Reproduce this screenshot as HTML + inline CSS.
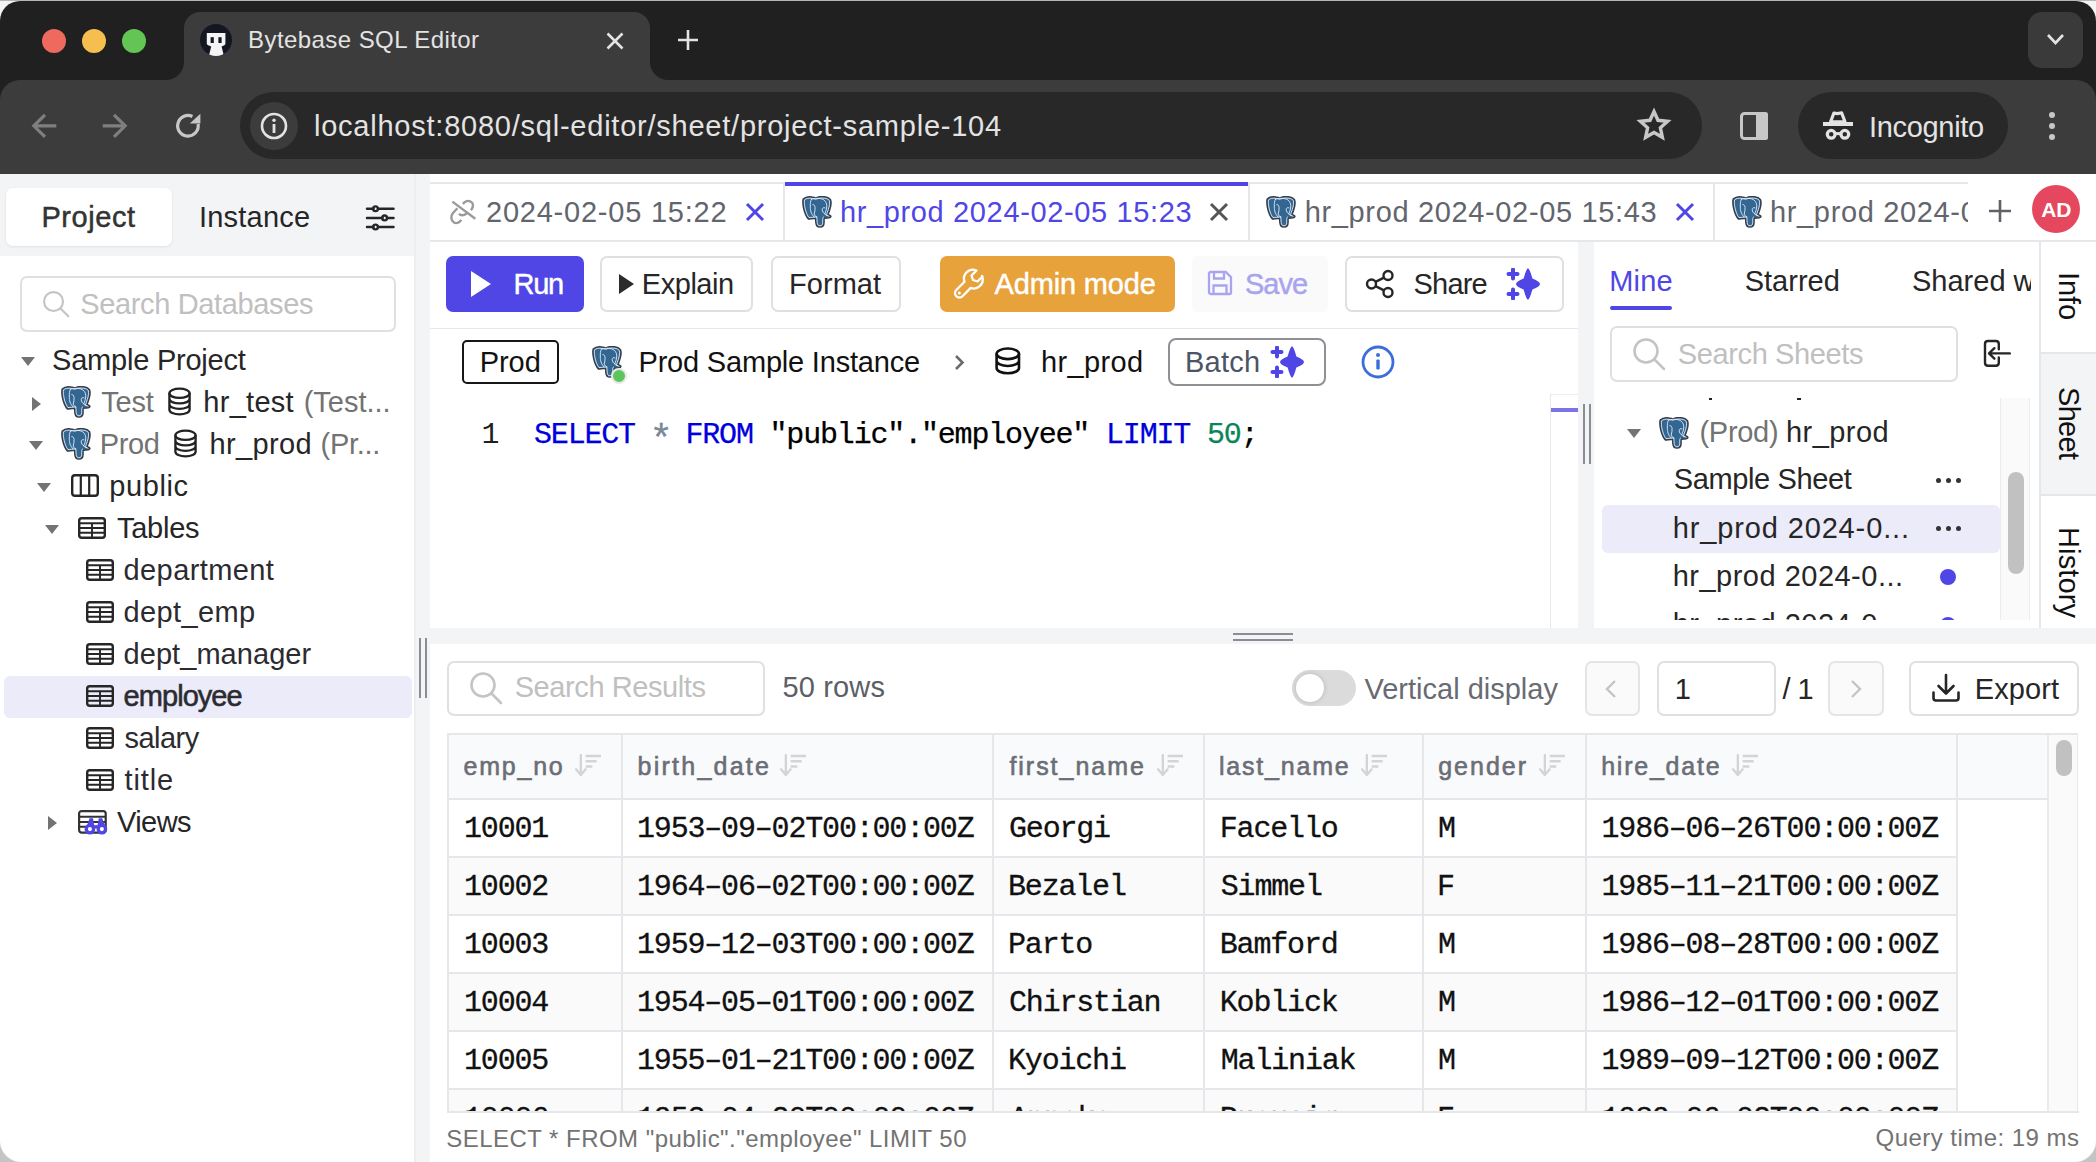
<!DOCTYPE html>
<html><head><meta charset="utf-8"><title>Bytebase SQL Editor</title>
<style>
html,body{margin:0;padding:0;width:2096px;height:1162px;overflow:hidden;background:#b9b9b9;font-family:"Liberation Sans",sans-serif;}
#win{position:absolute;left:0;top:0;width:2096px;height:1162px;overflow:hidden;}
#win div, #win span, #win svg{position:absolute;}
svg{overflow:visible}
#win span span{position:static}
</style></head><body>
<svg width="0" height="0" style="position:absolute">
<defs>
<symbol id="pg" viewBox="0 0 31 33">
<path id="pgo" d="M1.2 3.2C3.5 1 7 0.6 9.5 0.9 11.2 1.1 12.8 1.6 14.2 1.9 16 1.2 18 0.6 20.5 0.6 23.8 0.6 27.5 1.2 29.5 3.8 30.5 6.5 29.8 11 28.6 14.5 27.9 16.6 27.2 18.2 26.8 19.5 28.2 19.6 30 20.1 29.9 21.3 29.6 22.6 27 23 22.8 23V27.6C22.8 30 21.6 32 18.6 32.2 15.8 32.3 14.6 30.2 14.3 27.5L14 23.1C11.5 23.3 8.8 23.6 6.6 23.8 4.3 21.6 2.6 17 1.6 12.6.9 9 .6 5.5 1.2 3.2Z" fill="#336791" stroke="#363b44" stroke-width="1.5" stroke-linejoin="round"/>
<path d="M2.6 4C4.5 2.4 7.2 2.1 9.6 2.4 11 2.6 12.6 3.1 14.2 3.4 16 2.7 18 2.1 20.5 2.1 23.6 2.1 26.7 2.7 28.2 4.5 28.9 6.8 28.3 10.6 27.2 14 26.6 15.9 25.8 17.5 25.3 19.8 26.6 20.4 28 20.7 28.3 21.3M22.6 21.5C21.3 21.7 21.4 24 21.4 27.5 21.4 29.6 20.5 30.8 18.6 30.8 16.7 30.9 15.9 29.6 15.7 27.4L15.3 21.6C12.6 21.9 9.6 22.2 7.2 22.3 5.5 20.3 4.1 16.8 3.1 12.4 2.5 9.2 2.2 6 2.6 4" fill="none" stroke="#e8f0ff" stroke-width="0.9"/>
<path d="M9.8 3.2C8.6 5 8.5 8 8.6 11.5 8.7 15 9 18 12.6 21.8M9.8 3.2C12 2.2 17 2 20.5 3 23.5 4 25.5 6.5 25.6 10 25.6 13.5 24.4 16.3 23.5 18.6 24.2 19.6 25.4 20.2 26.6 20.4M11.2 8.8C12.3 8.8 13.3 9.8 13.5 11.8 13.6 14 13.3 16.5 12.6 18.6 12.9 20 13.8 21.2 15.3 21.6M23.8 12.3C22.2 11.6 20.9 12.2 20.9 14.2 21 16 22 17.6 23.5 18.6" fill="none" stroke="#e8f0ff" stroke-width="0.9" stroke-linecap="round"/>
</symbol>
<symbol id="db" viewBox="0 0 26 30">
<ellipse cx="13" cy="6.5" rx="10.5" ry="4.8" fill="none" stroke="#222" stroke-width="2.4"/>
<path d="M2.5 6.5v17c0 2.7 4.7 4.8 10.5 4.8s10.5-2.1 10.5-4.8v-17M2.5 12.2c0 2.7 4.7 4.8 10.5 4.8s10.5-2.1 10.5-4.8M2.5 17.9c0 2.7 4.7 4.8 10.5 4.8s10.5-2.1 10.5-4.8" fill="none" stroke="#222" stroke-width="2.4"/>
</symbol>
<symbol id="db2" viewBox="0 0 26 30">
<ellipse cx="12.8" cy="7.8" rx="11.2" ry="5.3" fill="none" stroke="#111" stroke-width="2.6"/>
<path d="M1.6 7.8V22c0 2.9 5 5.3 11.2 5.3S24 24.9 24 22V7.8M1.6 14.7c0 2.9 5 5.3 11.2 5.3S24 17.6 24 14.7" fill="none" stroke="#111" stroke-width="2.6"/>
</symbol>
<symbol id="tbl" viewBox="0 0 28 22">
<rect x="1.2" y="1.2" width="25.6" height="19.6" rx="2.5" fill="none" stroke="#262626" stroke-width="2.4"/>
<path d="M1.2 6.2h25.6M1.2 11h25.6M1.2 15.8h25.6M14 6.2v14.6" fill="none" stroke="#262626" stroke-width="1.9"/>
</symbol>
<symbol id="xx" viewBox="0 0 20 20">
<path d="M2 2L18 18M18 2L2 18" stroke="currentColor" stroke-width="3" stroke-linecap="butt"/>
</symbol>
<symbol id="spark" viewBox="0 0 34 32">
<path d="M22 0.3Q23.5 0.3 26.4 10.5Q34 13.5 34 16Q34 18.5 26.4 21.5Q23.5 31.7 22 31.7Q20.5 31.7 17.6 21.5Q10 18.5 10 16Q10 13.5 17.6 10.5Q20.5 0.3 22 0.3Z" fill="#4f46e5"/>
<path d="M7 1.5v9M2.5 6h9M7 21.5v9M2.5 26h9" stroke="#4f46e5" stroke-width="4" stroke-linecap="round"/>
</symbol>
<symbol id="mag" viewBox="0 0 34 34">
<circle cx="14" cy="14" r="11.5" fill="none" stroke="currentColor" stroke-width="2.6"/>
<path d="M22.5 22.5L32 32" stroke="currentColor" stroke-width="2.6" stroke-linecap="round"/>
</symbol>
<symbol id="sort" viewBox="0 0 28 24">
<path d="M6 1v20M1 16l5 6 5-6" fill="none" stroke="#d4d4d4" stroke-width="2.4" stroke-linecap="round" stroke-linejoin="round"/>
<path d="M11 2.2h16M11 7.6h11.5M11 13h7" stroke="#d4d4d4" stroke-width="2.6"/>
</symbol>
</defs></svg>
<div id="win">
<div style="left:0;top:0;width:2096px;height:1162px;background:#f4f4f4;"></div>
<div style="left:0;top:0;width:2096px;height:1px;background:#b5b5b5;"></div>
<div style="left:0;top:1px;width:2096px;height:1161px;background:#fff;border-radius:20px 20px 0 0;overflow:hidden;"><div style="left:0;top:0;width:2096px;height:100px;background:#202020;"></div><div style="left:0;top:79px;width:2096px;height:94px;background:#3c3c3c;border-radius:20px 20px 0 0;"></div></div>
<div style="position:absolute;left:42px;top:29px;width:24px;height:24px;border-radius:50%;background:#ee6a5f;"></div>
<div style="position:absolute;left:82px;top:29px;width:24px;height:24px;border-radius:50%;background:#f5be4f;"></div>
<div style="position:absolute;left:122px;top:29px;width:24px;height:24px;border-radius:50%;background:#62c554;"></div>
<div style="position:absolute;left:184px;top:12px;width:466px;height:68px;background:#3c3c3c;border-radius:16px 16px 0 0;"></div>
<div style="position:absolute;left:166px;top:62px;width:18px;height:18px;background:radial-gradient(circle at 0 0, #202020 17.5px, #3c3c3c 18.5px);"></div>
<div style="position:absolute;left:650px;top:62px;width:18px;height:18px;background:radial-gradient(circle at 100% 0, #202020 17.5px, #3c3c3c 18.5px);"></div>
<svg style="left:199px;top:23px" width="34" height="34" viewBox="0 0 34 34"><clipPath id="fvc"><circle cx="17" cy="17" r="16"/></clipPath><circle cx="17" cy="17" r="16" fill="#141722"/><path clip-path="url(#fvc)" d="M7.8 9.9H26.4V20.8C26.4 22 25 22.8 22.6 23.4L25.2 34H9.6L12.2 23.4C9.8 22.8 7.8 22 7.8 20.8Z" fill="#f4f4f4"/><rect x="11.6" y="14.2" width="3.2" height="5.8" fill="#141722"/><rect x="19.4" y="14.2" width="3.2" height="5.8" fill="#141722"/></svg>
<span style='position:absolute;left:248.00px;top:27.68px;font:400 24px/1 "Liberation Sans", sans-serif;color:#e3e3e3;letter-spacing:0.437px;white-space:nowrap;'>Bytebase SQL Editor</span>
<svg style="left:606px;top:32px" width="18" height="18" viewBox="0 0 18 18"><path d="M1.5 1.5l15 15M16.5 1.5l-15 15" stroke="#e3e3e3" stroke-width="2.6"/></svg>
<svg style="left:677px;top:29px" width="22" height="22" viewBox="0 0 22 22"><path d="M11 1v20M1 11h20" stroke="#e3e3e3" stroke-width="2.6"/></svg>
<div style="position:absolute;left:2028px;top:12px;width:55px;height:56px;background:#3a3a3a;border-radius:14px;"></div>
<svg style="left:2046px;top:33px" width="19" height="13" viewBox="0 0 19 13"><path d="M2 2l7.5 8 7.5-8" fill="none" stroke="#e3e3e3" stroke-width="2.6"/></svg>
<svg style="left:31px;top:113px" width="26" height="26" viewBox="0 0 26 26"><path d="M25.3 12.8H2.5M14 1.8L2.8 12.8 14 23.8" fill="none" stroke="#7f7f7f" stroke-width="3.2"/></svg>
<svg style="left:102px;top:113px" width="26" height="26" viewBox="0 0 26 26"><path d="M0.7 12.8H23.5M12 1.8L23.2 12.8 12 23.8" fill="none" stroke="#7f7f7f" stroke-width="3.2"/></svg>
<svg style="left:175px;top:112px" width="28" height="28" viewBox="0 0 28 28"><path d="M23.1 12.0A10.3 10.3 0 1 1 17.4 4.5" fill="none" stroke="#c7c7c7" stroke-width="3.2"/><path d="M14.8 11.5H25.4V1.8Z" fill="#c7c7c7"/></svg>
<div style="position:absolute;left:240px;top:92px;width:1462px;height:67px;background:#282828;border-radius:34px;"></div>
<div style="position:absolute;left:250px;top:102px;width:48px;height:48px;background:#3c3c3c;border-radius:50%;"></div>
<svg style="left:260px;top:112px" width="28" height="28" viewBox="0 0 28 28"><circle cx="14" cy="14" r="12" fill="none" stroke="#e3e3e3" stroke-width="2.6"/><rect x="12.6" y="12" width="2.8" height="9" fill="#e3e3e3"/><circle cx="14" cy="8.3" r="1.7" fill="#e3e3e3"/></svg>
<span style='position:absolute;left:314.00px;top:112.25px;font:400 29px/1 "Liberation Sans", sans-serif;color:#e3e3e3;letter-spacing:0.765px;white-space:nowrap;'>localhost:8080/sql-editor/sheet/project-sample-104</span>
<svg style="left:1637px;top:108px" width="34" height="33" viewBox="0 0 34 33"><path d="M17 3.5l4 8.8 9.6 1-7.2 6.5 2 9.5L17 24.5l-8.4 4.8 2-9.5-7.2-6.5 9.6-1Z" fill="none" stroke="#c7c7c7" stroke-width="3.4" stroke-linejoin="miter"/></svg>
<svg style="left:1739px;top:111px" width="30" height="30" viewBox="0 0 30 30"><rect x="2.5" y="2.5" width="25" height="25" rx="3" fill="none" stroke="#c7c7c7" stroke-width="3"/><rect x="17" y="1" width="12" height="28" rx="2.5" fill="#c7c7c7"/></svg>
<div style="position:absolute;left:1798px;top:92px;width:210px;height:67px;background:#282828;border-radius:34px;"></div>
<svg style="left:1822px;top:110px" width="32" height="31" viewBox="0 0 32 31"><path d="M8.6 11.8L11.9 3 15.4 3.6 19.6 2.8 23 11.8Z" fill="none" stroke="#e3e3e3" stroke-width="3.2" stroke-linejoin="round"/><rect x="1" y="12" width="30" height="4" fill="#e3e3e3"/><circle cx="9.2" cy="24.3" r="3.9" fill="none" stroke="#e3e3e3" stroke-width="3.3"/><circle cx="22.8" cy="24.3" r="3.9" fill="none" stroke="#e3e3e3" stroke-width="3.3"/><path d="M12.5 23.6h7" stroke="#e3e3e3" stroke-width="3"/></svg>
<span style='position:absolute;left:1869.00px;top:112.75px;font:400 29px/1 "Liberation Sans", sans-serif;color:#e3e3e3;letter-spacing:-0.321px;white-space:nowrap;'>Incognito</span>
<div style="position:absolute;left:2049px;top:112px;width:6px;height:6px;background:#c7c7c7;border-radius:50%;"></div>
<div style="position:absolute;left:2049px;top:123px;width:6px;height:6px;background:#c7c7c7;border-radius:50%;"></div>
<div style="position:absolute;left:2049px;top:134px;width:6px;height:6px;background:#c7c7c7;border-radius:50%;"></div>
<div style="left:0;top:174px;width:2096px;height:988px;background:#fff;"></div>
<div style="position:absolute;left:0px;top:174px;width:414px;height:82px;background:#f3f4f6;"></div>
<div style="position:absolute;left:6px;top:188px;width:166px;height:58px;background:#fff;border-radius:7px;box-shadow:0 1px 3px rgba(0,0,0,0.08);"></div>
<span style='position:absolute;left:41.40px;top:203.25px;font:400 29px/1 "Liberation Sans", sans-serif;color:#333;letter-spacing:0.567px;white-space:nowrap;-webkit-text-stroke:0.45px #333;'>Project</span>
<span style='position:absolute;left:198.90px;top:203.25px;font:400 29px/1 "Liberation Sans", sans-serif;color:#262626;letter-spacing:0.229px;white-space:nowrap;'>Instance</span>
<svg style="left:366px;top:204px" width="29" height="27" viewBox="0 0 29 27"><path d="M1 4.8h6.5M12 4.8h15.5M1 13.9h15.5M21 13.9h6.5M1 23h6.5M12 23h15.5" stroke="#262626" stroke-width="2.5" stroke-linecap="round"/><circle cx="9.5" cy="4.8" r="2.4" fill="none" stroke="#262626" stroke-width="2.3"/><circle cx="18.6" cy="13.9" r="2.4" fill="none" stroke="#262626" stroke-width="2.3"/><circle cx="9.5" cy="23" r="2.4" fill="none" stroke="#262626" stroke-width="2.3"/></svg>
<div style="position:absolute;left:414px;top:174px;width:16px;height:988px;background:#f3f4f6;"></div>
<div style="position:absolute;left:414px;top:174px;width:2px;height:988px;background:#eceef1;"></div>
<div style="position:absolute;left:419px;top:638px;width:2px;height:60px;background:#8a8d93;"></div>
<div style="position:absolute;left:425px;top:638px;width:2px;height:60px;background:#8a8d93;"></div>
<div style="position:absolute;left:20px;top:276px;width:376px;height:56px;box-sizing:border-box;border:2px solid #e0e0e0;border-radius:7px;background:#fff;"></div>
<svg style="left:42px;top:290px" width="28" height="28" viewBox="0 0 34 34" color="#c4c4c4"><use href="#mag"/></svg>
<span style='position:absolute;left:80.20px;top:289.85px;font:400 29px/1 "Liberation Sans", sans-serif;color:#c0c0c0;letter-spacing:-0.352px;white-space:nowrap;'>Search Databases</span>
<svg style="left:21px;top:357px" width="14" height="9" viewBox="0 0 14 9"><path d="M0 0h14L7 9Z" fill="#737373"/></svg>
<span style='position:absolute;left:52.00px;top:346.25px;font:400 29px/1 "Liberation Sans", sans-serif;color:#262626;letter-spacing:-0.214px;white-space:nowrap;'>Sample Project</span>
<svg style="left:32px;top:397px" width="9" height="14" viewBox="0 0 9 14"><path d="M0 0v14L9 7Z" fill="#737373"/></svg>
<svg style="left:61px;top:386px" width="30" height="31.9" viewBox="0 0 31 33"><use href="#pg"/></svg>
<span style='position:absolute;left:101.20px;top:388.25px;font:400 29px/1 "Liberation Sans", sans-serif;color:#737373;letter-spacing:-0.176px;white-space:nowrap;'>Test</span>
<svg style="left:167px;top:387px" width="25" height="29" viewBox="0 0 26 30"><use href="#db"/></svg>
<span style='position:absolute;left:203.30px;top:388.25px;font:400 29px/1 "Liberation Sans", sans-serif;color:#262626;letter-spacing:0.283px;white-space:nowrap;'>hr_test</span>
<span style='position:absolute;left:303.70px;top:388.25px;font:400 29px/1 "Liberation Sans", sans-serif;color:#737373;letter-spacing:-0.008px;white-space:nowrap;'>(Test...</span>
<svg style="left:29px;top:441px" width="14" height="9" viewBox="0 0 14 9"><path d="M0 0h14L7 9Z" fill="#737373"/></svg>
<svg style="left:61px;top:428px" width="30" height="31.9" viewBox="0 0 31 33"><use href="#pg"/></svg>
<span style='position:absolute;left:99.80px;top:430.25px;font:400 29px/1 "Liberation Sans", sans-serif;color:#737373;letter-spacing:-0.376px;white-space:nowrap;'>Prod</span>
<svg style="left:173px;top:429px" width="25" height="29" viewBox="0 0 26 30"><use href="#db"/></svg>
<span style='position:absolute;left:209.40px;top:430.25px;font:400 29px/1 "Liberation Sans", sans-serif;color:#262626;letter-spacing:0.395px;white-space:nowrap;'>hr_prod</span>
<span style='position:absolute;left:320.50px;top:430.25px;font:400 29px/1 "Liberation Sans", sans-serif;color:#737373;letter-spacing:-0.274px;white-space:nowrap;'>(Pr...</span>
<svg style="left:37px;top:483px" width="14" height="9" viewBox="0 0 14 9"><path d="M0 0h14L7 9Z" fill="#737373"/></svg>
<svg style="left:71px;top:474px" width="28" height="23" viewBox="0 0 28 23"><rect x="1.2" y="1.2" width="25.6" height="20.6" rx="2.8" fill="none" stroke="#262626" stroke-width="2.4"/><path d="M9.8 1.2v20.6M18.2 1.2v20.6" stroke="#262626" stroke-width="2.2"/></svg>
<span style='position:absolute;left:109.20px;top:472.25px;font:400 29px/1 "Liberation Sans", sans-serif;color:#262626;letter-spacing:0.626px;white-space:nowrap;'>public</span>
<svg style="left:45px;top:525px" width="14" height="9" viewBox="0 0 14 9"><path d="M0 0h14L7 9Z" fill="#737373"/></svg>
<svg style="left:78px;top:517px" width="28" height="22" viewBox="0 0 28 22"><use href="#tbl"/></svg>
<span style='position:absolute;left:117.00px;top:514.25px;font:400 29px/1 "Liberation Sans", sans-serif;color:#262626;letter-spacing:-0.266px;white-space:nowrap;'>Tables</span>
<div style="position:absolute;left:4px;top:676px;width:408px;height:42px;background:#ebebfa;border-radius:6px;"></div>
<svg style="left:86px;top:559px" width="28" height="22" viewBox="0 0 28 22"><use href="#tbl"/></svg>
<span style='position:absolute;left:123.60px;top:556.25px;font:400 29px/1 "Liberation Sans", sans-serif;color:#2b2b30;letter-spacing:0.384px;white-space:nowrap;'>department</span>
<svg style="left:86px;top:601px" width="28" height="22" viewBox="0 0 28 22"><use href="#tbl"/></svg>
<span style='position:absolute;left:123.60px;top:598.25px;font:400 29px/1 "Liberation Sans", sans-serif;color:#2b2b30;letter-spacing:0.363px;white-space:nowrap;'>dept_emp</span>
<svg style="left:86px;top:643px" width="28" height="22" viewBox="0 0 28 22"><use href="#tbl"/></svg>
<span style='position:absolute;left:123.60px;top:640.25px;font:400 29px/1 "Liberation Sans", sans-serif;color:#2b2b30;letter-spacing:0.048px;white-space:nowrap;'>dept_manager</span>
<svg style="left:86px;top:685px" width="28" height="22" viewBox="0 0 28 22"><use href="#tbl"/></svg>
<span style='position:absolute;left:123.60px;top:682.25px;font:400 29px/1 "Liberation Sans", sans-serif;color:#2b2b30;letter-spacing:-0.951px;white-space:nowrap;-webkit-text-stroke:0.55px #2b2b30;'>employee</span>
<svg style="left:86px;top:727px" width="28" height="22" viewBox="0 0 28 22"><use href="#tbl"/></svg>
<span style='position:absolute;left:124.60px;top:724.25px;font:400 29px/1 "Liberation Sans", sans-serif;color:#2b2b30;letter-spacing:-0.551px;white-space:nowrap;'>salary</span>
<svg style="left:86px;top:769px" width="28" height="22" viewBox="0 0 28 22"><use href="#tbl"/></svg>
<span style='position:absolute;left:124.60px;top:766.25px;font:400 29px/1 "Liberation Sans", sans-serif;color:#2b2b30;letter-spacing:0.850px;white-space:nowrap;'>title</span>
<svg style="left:48px;top:816px" width="9" height="14" viewBox="0 0 9 14"><path d="M0 0v14L9 7Z" fill="#737373"/></svg>
<svg style="left:78px;top:810px" width="31" height="26" viewBox="0 0 31 26"><rect x="1.1" y="1.1" width="26.6" height="21.5" rx="2.5" fill="none" stroke="#333" stroke-width="2.2"/><path d="M1.1 6.7h26.6M1.1 11.9h26.6M1.1 16.7h26.6" stroke="#333" stroke-width="2"/><path d="M8 18.5L11.6 8.3h3.4l1.2 7h3.4l1.2-7h3.4l3.6 10.2Z" fill="#4f46e5"/><circle cx="11.9" cy="19.1" r="3.7" fill="#fff" stroke="#4f46e5" stroke-width="3.3"/><circle cx="23.9" cy="19.1" r="3.7" fill="#fff" stroke="#4f46e5" stroke-width="3.3"/></svg>
<span style='position:absolute;left:117.00px;top:808.25px;font:400 29px/1 "Liberation Sans", sans-serif;color:#262626;letter-spacing:-0.583px;white-space:nowrap;'>Views</span>
<div style="position:absolute;left:430px;top:182px;width:1538px;height:2px;background:#e5e7eb;"></div>
<div style="position:absolute;left:430px;top:240px;width:1666px;height:2px;background:#e5e7eb;"></div>
<div style="position:absolute;left:783px;top:184px;width:2px;height:56px;background:#e5e7eb;"></div>
<div style="position:absolute;left:1248px;top:184px;width:2px;height:56px;background:#e5e7eb;"></div>
<div style="position:absolute;left:1713px;top:184px;width:2px;height:56px;background:#e5e7eb;"></div>
<div style="position:absolute;left:785px;top:182px;width:463px;height:4px;background:#4f46e5;"></div>
<svg style="left:449px;top:199px" width="28" height="26" viewBox="0 0 28 26"><path d="M3.4 2.6L26.3 19.7M13.9 5C15.5 2.5 18.5 1 21.5 2.5 24.5 4 25 7.5 22 11.2M8.4 9.2L4 14C1.5 17 1.8 21.5 5 23.5 7.5 25 10.5 23.5 12.3 20.8M10 14.6C11.5 16.8 14.5 17 17.7 14.3" fill="none" stroke="#9a9a9a" stroke-width="2.4" stroke-linecap="butt"/></svg>
<span style='position:absolute;left:486.00px;top:198.25px;font:400 29px/1 "Liberation Sans", sans-serif;color:#62656d;letter-spacing:0.777px;white-space:nowrap;'>2024-02-05 15:22</span>
<svg style="left:745px;top:202px;color:#4f46e5" width="20" height="20" viewBox="0 0 20 20"><use href="#xx"/></svg>
<svg style="left:802px;top:196px" width="30" height="31.9" viewBox="0 0 31 33"><use href="#pg"/></svg>
<span style='position:absolute;left:839.90px;top:198.25px;font:400 29px/1 "Liberation Sans", sans-serif;color:#4f46e5;letter-spacing:0.645px;white-space:nowrap;'>hr_prod 2024-02-05 15:23</span>
<svg style="left:1209px;top:202px;color:#555" width="20" height="20" viewBox="0 0 20 20"><use href="#xx"/></svg>
<svg style="left:1266px;top:196px" width="30" height="31.9" viewBox="0 0 31 33"><use href="#pg"/></svg>
<span style='position:absolute;left:1304.70px;top:198.25px;font:400 29px/1 "Liberation Sans", sans-serif;color:#62656d;letter-spacing:0.650px;white-space:nowrap;'>hr_prod 2024-02-05 15:43</span>
<svg style="left:1675px;top:202px;color:#4f46e5" width="20" height="20" viewBox="0 0 20 20"><use href="#xx"/></svg>
<svg style="left:1732px;top:196px" width="30" height="31.9" viewBox="0 0 31 33"><use href="#pg"/></svg>
<div style="left:0;top:0;width:1968px;height:1162px;overflow:hidden;">
<span style='position:absolute;left:1770.00px;top:198.25px;font:400 29px/1 "Liberation Sans", sans-serif;color:#62656d;letter-spacing:0.650px;white-space:nowrap;'>hr_prod 2024-02-05 15:52</span>
</div>
<svg style="left:1989px;top:200px" width="22" height="22" viewBox="0 0 22 22"><path d="M11 0v22M0 11h22" stroke="#5f6368" stroke-width="2.6"/></svg>
<div style="position:absolute;left:2032px;top:185px;width:48px;height:48px;background:#e5485e;border-radius:50%;"></div>
<span style='position:absolute;left:2041.30px;top:198.82px;font:700 21px/1 "Liberation Sans", sans-serif;color:#fff;letter-spacing:-0.266px;white-space:nowrap;'>AD</span>
<div style="position:absolute;left:446px;top:256px;width:138px;height:56px;background:#4f46e5;border-radius:7px;"></div>
<svg style="left:470px;top:270px" width="22" height="28" viewBox="0 0 22 28"><path d="M1 1l20 13L1 27Z" fill="#fff"/></svg>
<span style='position:absolute;left:513.60px;top:270.25px;font:400 29px/1 "Liberation Sans", sans-serif;color:#fff;letter-spacing:-1.336px;white-space:nowrap;-webkit-text-stroke:0.45px #fff;'>Run</span>
<div style="position:absolute;left:600px;top:256px;width:153px;height:56px;box-sizing:border-box;border:2px solid #e0e0e0;border-radius:7px;background:#fff;"></div>
<svg style="left:619px;top:274px" width="15" height="20" viewBox="0 0 15 20"><path d="M0 0l15 10L0 20Z" fill="#2b2b2b"/></svg>
<span style='position:absolute;left:641.80px;top:270.25px;font:400 29px/1 "Liberation Sans", sans-serif;color:#262626;letter-spacing:-0.464px;white-space:nowrap;'>Explain</span>
<div style="position:absolute;left:771px;top:256px;width:130px;height:56px;box-sizing:border-box;border:2px solid #e0e0e0;border-radius:7px;background:#fff;"></div>
<span style='position:absolute;left:789.00px;top:270.25px;font:400 29px/1 "Liberation Sans", sans-serif;color:#262626;letter-spacing:0.043px;white-space:nowrap;'>Format</span>
<div style="position:absolute;left:940px;top:256px;width:235px;height:56px;background:#e8a23b;border-radius:7px;"></div>
<svg style="left:953px;top:268px" width="32" height="32" viewBox="0 0 32 32"><path d="M29.5 8.5l-5 5-4.5-1.5-1.5-4.5 5-5c-3.5-1.4-7.7-.6-10.3 2.3-2.3 2.5-2.8 6-1.7 9L3.3 22c-1.7 1.7-1.7 4.5 0 6.2 1.7 1.7 4.5 1.7 6.2 0l8.2-8.3c3 1.1 6.5.6 9-1.7 2.9-2.6 3.7-6.8 2.3-10.3Z" fill="none" stroke="#fff" stroke-width="2.3" stroke-linejoin="round"/><circle cx="6.4" cy="25.1" r="1.5" fill="#fff"/></svg>
<span style='position:absolute;left:994.50px;top:270.25px;font:400 29px/1 "Liberation Sans", sans-serif;color:#fff;letter-spacing:-0.152px;white-space:nowrap;-webkit-text-stroke:0.45px #fff;'>Admin mode</span>
<div style="position:absolute;left:1192px;top:256px;width:136px;height:56px;background:#fafafa;border-radius:7px;"></div>
<svg style="left:1207px;top:270px" width="26" height="26" viewBox="0 0 26 26"><path d="M2 3.5C2 2.7 2.7 2 3.5 2h15.3L24 7.2v15.3c0 .8-.7 1.5-1.5 1.5h-19C2.7 24 2 23.3 2 22.5Z" fill="none" stroke="#a9a4ee" stroke-width="2.3"/><path d="M7 2v6.5h10V2M6.5 24v-8.5h13V24" fill="none" stroke="#a9a4ee" stroke-width="2.3"/></svg>
<span style='position:absolute;left:1245.00px;top:270.25px;font:400 29px/1 "Liberation Sans", sans-serif;color:#a9a4ee;letter-spacing:-0.990px;white-space:nowrap;-webkit-text-stroke:0.45px #a9a4ee;'>Save</span>
<div style="position:absolute;left:1345px;top:256px;width:219px;height:56px;box-sizing:border-box;border:2px solid #e0e0e0;border-radius:7px;background:#fff;"></div>
<svg style="left:1365px;top:269px" width="30" height="30" viewBox="0 0 30 30"><circle cx="23" cy="6.5" r="4.5" fill="none" stroke="#262626" stroke-width="2.4"/><circle cx="6.5" cy="15" r="4.5" fill="none" stroke="#262626" stroke-width="2.4"/><circle cx="23" cy="23.5" r="4.5" fill="none" stroke="#262626" stroke-width="2.4"/><path d="M10.5 12.8l8.5-4.2M10.5 17.2l8.5 4.2" stroke="#262626" stroke-width="2.4"/></svg>
<span style='position:absolute;left:1413.50px;top:270.25px;font:400 29px/1 "Liberation Sans", sans-serif;color:#262626;letter-spacing:-0.789px;white-space:nowrap;'>Share</span>
<svg style="left:1506px;top:268px" width="34" height="32" viewBox="0 0 34 32"><use href="#spark"/></svg>
<div style="position:absolute;left:430px;top:328px;width:1148px;height:1px;background:#e5e7eb;"></div>
<div style="position:absolute;left:462px;top:340px;width:97px;height:44px;box-sizing:border-box;border:2px solid #161616;border-radius:5px;"></div>
<span style='position:absolute;left:479.70px;top:348.25px;font:400 29px/1 "Liberation Sans", sans-serif;color:#111;letter-spacing:-0.043px;white-space:nowrap;'>Prod</span>
<svg style="left:592px;top:346px" width="30" height="31.9" viewBox="0 0 31 33"><use href="#pg"/></svg>
<div style="position:absolute;left:611px;top:368px;width:16px;height:16px;background:#5ec45e;border-radius:50%;border:2.5px solid #e8e8e8;box-sizing:border-box;"></div>
<span style='position:absolute;left:638.50px;top:348.25px;font:400 29px/1 "Liberation Sans", sans-serif;color:#111;letter-spacing:-0.195px;white-space:nowrap;'>Prod Sample Instance</span>
<svg style="left:954px;top:354px" width="11" height="17" viewBox="0 0 11 17"><path d="M2 2l6.5 6.5L2 15" fill="none" stroke="#6b6b6b" stroke-width="2.6"/></svg>
<svg style="left:995px;top:346px" width="26" height="30" viewBox="0 0 26 30"><use href="#db2"/></svg>
<span style='position:absolute;left:1041.00px;top:348.25px;font:400 29px/1 "Liberation Sans", sans-serif;color:#111;letter-spacing:0.362px;white-space:nowrap;'>hr_prod</span>
<div style="position:absolute;left:1168px;top:338px;width:158px;height:48px;box-sizing:border-box;border:2px solid #8f9096;border-radius:8px;"></div>
<span style='position:absolute;left:1185.00px;top:348.25px;font:400 29px/1 "Liberation Sans", sans-serif;color:#4b5563;letter-spacing:0.243px;white-space:nowrap;'>Batch</span>
<svg style="left:1270px;top:346px" width="34" height="32" viewBox="0 0 34 32"><use href="#spark"/></svg>
<svg style="left:1361px;top:345px" width="34" height="34" viewBox="0 0 34 34"><circle cx="17" cy="17" r="15" fill="none" stroke="#3b6ddb" stroke-width="2.8"/><rect x="15.3" y="14.5" width="3.4" height="10" rx="1" fill="#3b6ddb"/><circle cx="17" cy="10" r="2" fill="#3b6ddb"/></svg>
<span style='position:absolute;left:481.40px;top:420.02px;font:400 30px/1 "Liberation Mono", monospace;color:#1f1f1f;letter-spacing:-1.180px;white-space:nowrap;'>1</span>
<span style='position:absolute;left:534.00px;top:420.02px;font:400 30px/1 "Liberation Mono", monospace;color:#000;letter-spacing:-1.180px;white-space:nowrap;-webkit-text-stroke:0.25px currentColor;'><span style="color:#0000dd">SELECT</span> <span style="display:inline-block;width:16.82px;transform:translateY(6px) scale(1.3);color:#778899">*</span> <span style="color:#0000dd">FROM</span> "public"."employee" <span style="color:#0000dd">LIMIT</span> <span style="color:#098658">50</span>;</span>
<div style="position:absolute;left:1550px;top:394px;width:1px;height:234px;background:#e8e8e8;"></div>
<div style="position:absolute;left:1551px;top:394px;width:27px;height:1px;background:#eeeeee;"></div>
<div style="position:absolute;left:1551px;top:408px;width:27px;height:4px;background:#7b73e6;"></div>
<div style="position:absolute;left:1578px;top:242px;width:16px;height:386px;background:#f3f4f6;"></div>
<div style="position:absolute;left:1583px;top:404px;width:2px;height:60px;background:#8a8d93;"></div>
<div style="position:absolute;left:1589px;top:404px;width:2px;height:60px;background:#8a8d93;"></div>
<div style="position:absolute;left:430px;top:628px;width:1666px;height:16px;background:#f3f4f6;"></div>
<div style="position:absolute;left:1233px;top:633px;width:60px;height:2px;background:#8a8d93;"></div>
<div style="position:absolute;left:1233px;top:639px;width:60px;height:2px;background:#8a8d93;"></div>
<span style='position:absolute;left:1609.20px;top:266.95px;font:400 29px/1 "Liberation Sans", sans-serif;color:#4f46e5;letter-spacing:0.224px;white-space:nowrap;'>Mine</span>
<div style="position:absolute;left:1610px;top:306px;width:62px;height:4px;background:#4f46e5;border-radius:2px;"></div>
<span style='position:absolute;left:1744.70px;top:266.95px;font:400 29px/1 "Liberation Sans", sans-serif;color:#262626;letter-spacing:0.005px;white-space:nowrap;'>Starred</span>
<div style="left:0;top:0;width:2031px;height:1162px;overflow:hidden;">
<span style='position:absolute;left:1912.00px;top:266.95px;font:400 29px/1 "Liberation Sans", sans-serif;color:#262626;letter-spacing:0.000px;white-space:nowrap;'>Shared with me</span>
</div>
<div style="position:absolute;left:1610px;top:326px;width:348px;height:56px;box-sizing:border-box;border:2px solid #e0e0e0;border-radius:7px;background:#fff;"></div>
<svg style="left:1632px;top:337px" width="34" height="34" viewBox="0 0 34 34" color="#c4c4c4"><use href="#mag"/></svg>
<span style='position:absolute;left:1677.80px;top:339.85px;font:400 29px/1 "Liberation Sans", sans-serif;color:#c0c0c0;letter-spacing:-0.377px;white-space:nowrap;'>Search Sheets</span>
<svg style="left:1981px;top:338px" width="30" height="31" viewBox="0 0 30 31"><path d="M17.8 11.3V6c0-1.7-1.3-3-3-3H7C5.3 3 4 4.3 4 6v18.8c0 1.7 1.3 3 3 3h7.8c1.7 0 3-1.3 3-3v-5.3" fill="none" stroke="#262626" stroke-width="2.4" stroke-linecap="round"/><path d="M28.8 15.4H8.2M13.4 10.2L8 15.4l5.4 5.3" fill="none" stroke="#262626" stroke-width="2.4" stroke-linecap="round" stroke-linejoin="round"/></svg>
<div style="left:0;top:398px;width:2040px;height:222px;overflow:hidden;">
<div style="left:0;top:-398px;width:2040px;height:1162px;">
<div style="position:absolute;left:1709px;top:398px;width:3px;height:2px;background:#222;"></div>
<div style="position:absolute;left:1797px;top:398px;width:4px;height:2px;background:#222;"></div>
<svg style="left:1627px;top:429px" width="14" height="9" viewBox="0 0 14 9"><path d="M0 0h14L7 9Z" fill="#737373"/></svg>
<svg style="left:1659px;top:417px" width="30" height="31.9" viewBox="0 0 31 33"><use href="#pg"/></svg>
<span style='position:absolute;left:1699.50px;top:417.75px;font:400 29px/1 "Liberation Sans", sans-serif;color:#737373;letter-spacing:-0.303px;white-space:nowrap;'>(Prod)</span>
<span style='position:absolute;left:1786.00px;top:417.75px;font:400 29px/1 "Liberation Sans", sans-serif;color:#262626;letter-spacing:0.445px;white-space:nowrap;'>hr_prod</span>
<span style='position:absolute;left:1673.70px;top:465.25px;font:400 29px/1 "Liberation Sans", sans-serif;color:#262626;letter-spacing:-0.374px;white-space:nowrap;'>Sample Sheet</span>
<div style="position:absolute;left:1935.5px;top:478px;width:5px;height:5px;background:#333;border-radius:50%;"></div>
<div style="position:absolute;left:1945.5px;top:478px;width:5px;height:5px;background:#333;border-radius:50%;"></div>
<div style="position:absolute;left:1955.5px;top:478px;width:5px;height:5px;background:#333;border-radius:50%;"></div>
<div style="position:absolute;left:1602px;top:505px;width:398px;height:48px;background:#ebebfa;border-radius:6px;"></div>
<span style='position:absolute;left:1672.70px;top:514.05px;font:400 29px/1 "Liberation Sans", sans-serif;color:#262626;letter-spacing:0.867px;white-space:nowrap;'>hr_prod 2024-0...</span>
<div style="position:absolute;left:1935.5px;top:526px;width:5px;height:5px;background:#333;border-radius:50%;"></div>
<div style="position:absolute;left:1945.5px;top:526px;width:5px;height:5px;background:#333;border-radius:50%;"></div>
<div style="position:absolute;left:1955.5px;top:526px;width:5px;height:5px;background:#333;border-radius:50%;"></div>
<span style='position:absolute;left:1672.70px;top:562.05px;font:400 29px/1 "Liberation Sans", sans-serif;color:#262626;letter-spacing:0.492px;white-space:nowrap;'>hr_prod 2024-0...</span>
<div style="position:absolute;left:1940px;top:569px;width:16px;height:16px;background:#4f46e5;border-radius:50%;"></div>
<span style='position:absolute;left:1672.70px;top:610.05px;font:400 29px/1 "Liberation Sans", sans-serif;color:#262626;letter-spacing:0.492px;white-space:nowrap;'>hr_prod 2024-0...</span>
<div style="position:absolute;left:1940px;top:617px;width:16px;height:16px;background:#4f46e5;border-radius:50%;"></div>
</div></div>
<div style="position:absolute;left:2000px;top:398px;width:30px;height:222px;background:#fafafa;border-left:1px solid #ececec;border-right:1px solid #ececec;box-sizing:border-box;"></div>
<div style="position:absolute;left:2008px;top:472px;width:16px;height:102px;background:#c1c1c1;border-radius:8px;"></div>
<div style="position:absolute;left:2039px;top:242px;width:2px;height:386px;background:#e5e7eb;"></div>
<div style="position:absolute;left:2041px;top:353px;width:55px;height:142px;background:#f3f4f6;"></div>
<div style="position:absolute;left:2041px;top:352px;width:55px;height:2px;background:#e5e7eb;"></div>
<div style="position:absolute;left:2041px;top:494px;width:55px;height:2px;background:#e5e7eb;"></div>
<span style='position:absolute;left:2082.55px;top:272.20px;font:400 29px/1 "Liberation Sans", sans-serif;color:#111;letter-spacing:-0.048px;white-space:nowrap;transform:rotate(90deg);transform-origin:0 0;'>Info</span>
<span style='position:absolute;left:2082.55px;top:387.00px;font:400 29px/1 "Liberation Sans", sans-serif;color:#111;letter-spacing:-0.682px;white-space:nowrap;transform:rotate(90deg);transform-origin:0 0;'>Sheet</span>
<span style='position:absolute;left:2082.55px;top:527.00px;font:400 29px/1 "Liberation Sans", sans-serif;color:#111;letter-spacing:0.129px;white-space:nowrap;transform:rotate(90deg);transform-origin:0 0;'>History</span>
<div style="position:absolute;left:447px;top:661px;width:318px;height:55px;box-sizing:border-box;border:2px solid #e0e0e0;border-radius:7px;background:#fff;"></div>
<svg style="left:469px;top:671px" width="34" height="34" viewBox="0 0 34 34" color="#c4c4c4"><use href="#mag"/></svg>
<span style='position:absolute;left:514.70px;top:673.45px;font:400 29px/1 "Liberation Sans", sans-serif;color:#c0c0c0;letter-spacing:-0.411px;white-space:nowrap;'>Search Results</span>
<span style='position:absolute;left:782.40px;top:673.45px;font:400 29px/1 "Liberation Sans", sans-serif;color:#5c5f66;letter-spacing:0.160px;white-space:nowrap;'>50 rows</span>
<div style="position:absolute;left:1292px;top:670px;width:64px;height:36px;background:#dbdbdb;border-radius:18px;"></div>
<div style="position:absolute;left:1296px;top:674px;width:28px;height:28px;background:#fff;border-radius:50%;box-shadow:0 0 4px 1px rgba(0,0,0,0.12);"></div>
<span style='position:absolute;left:1364.50px;top:675.25px;font:400 29px/1 "Liberation Sans", sans-serif;color:#686b72;letter-spacing:-0.002px;white-space:nowrap;'>Vertical display</span>
<div style="position:absolute;left:1585px;top:661px;width:55px;height:55px;box-sizing:border-box;border:2px solid #e5e5e5;border-radius:7px;background:#fafafa;"></div>
<svg style="left:1604px;top:679px" width="14" height="20" viewBox="0 0 14 20"><path d="M11 2L3 10l8 8" fill="none" stroke="#c4c4c4" stroke-width="2.4"/></svg>
<div style="position:absolute;left:1657px;top:661px;width:119px;height:55px;box-sizing:border-box;border:2px solid #e0e0e0;border-radius:7px;background:#fff;"></div>
<span style='position:absolute;left:1674.80px;top:674.95px;font:400 29px/1 "Liberation Sans", sans-serif;color:#262626;letter-spacing:0.000px;white-space:nowrap;'>1</span>
<span style='position:absolute;left:1782.50px;top:675.25px;font:400 29px/1 "Liberation Sans", sans-serif;color:#262626;letter-spacing:-0.557px;white-space:nowrap;'>/ 1</span>
<div style="position:absolute;left:1828px;top:661px;width:56px;height:55px;box-sizing:border-box;border:2px solid #e5e5e5;border-radius:7px;background:#fafafa;"></div>
<svg style="left:1849px;top:679px" width="14" height="20" viewBox="0 0 14 20"><path d="M3 2l8 8-8 8" fill="none" stroke="#c4c4c4" stroke-width="2.4"/></svg>
<div style="position:absolute;left:1909px;top:661px;width:170px;height:55px;box-sizing:border-box;border:2px solid #e0e0e0;border-radius:7px;background:#fff;"></div>
<svg style="left:1931px;top:673px" width="30" height="30" viewBox="0 0 30 30"><path d="M15 2v18M7.5 13l7.5 7.5 7.5-7.5" fill="none" stroke="#262626" stroke-width="2.6" stroke-linecap="round" stroke-linejoin="round"/><path d="M2.5 19.5v5.5c0 1.4 1.1 2.5 2.5 2.5h20c1.4 0 2.5-1.1 2.5-2.5v-5.5" fill="none" stroke="#262626" stroke-width="2.6" stroke-linecap="round"/></svg>
<span style='position:absolute;left:1974.80px;top:674.95px;font:400 29px/1 "Liberation Sans", sans-serif;color:#262626;letter-spacing:0.089px;white-space:nowrap;'>Export</span>
<div style="position:absolute;left:447px;top:733px;width:1631px;height:379px;box-sizing:border-box;border:2px solid #e5e7eb;border-bottom:none;background:#fff;"></div>
<div style="position:absolute;left:449px;top:735px;width:1600px;height:64px;background:#f9fafb;"></div>
<div style="position:absolute;left:2049px;top:735px;width:28px;height:377px;background:#fafafa;"></div>
<div style="position:absolute;left:2047px;top:735px;width:2px;height:377px;background:#ebebeb;"></div>
<div style="position:absolute;left:449px;top:857px;width:1507px;height:58px;background:#fafafa;"></div>
<div style="position:absolute;left:449px;top:973px;width:1507px;height:58px;background:#fafafa;"></div>
<div style="position:absolute;left:449px;top:1089px;width:1507px;height:22px;background:#fafafa;"></div>
<div style="position:absolute;left:449px;top:798px;width:1599px;height:2px;background:#e5e7eb;"></div>
<div style="position:absolute;left:621px;top:735px;width:2px;height:377px;background:#e5e7eb;"></div>
<div style="position:absolute;left:992px;top:735px;width:2px;height:377px;background:#e5e7eb;"></div>
<div style="position:absolute;left:1203px;top:735px;width:2px;height:377px;background:#e5e7eb;"></div>
<div style="position:absolute;left:1422px;top:735px;width:2px;height:377px;background:#e5e7eb;"></div>
<div style="position:absolute;left:1585px;top:735px;width:2px;height:377px;background:#e5e7eb;"></div>
<div style="position:absolute;left:1956px;top:735px;width:2px;height:377px;background:#e5e7eb;"></div>
<div style="position:absolute;left:449px;top:856px;width:1508px;height:2px;background:#e5e7eb;"></div>
<div style="position:absolute;left:449px;top:914px;width:1508px;height:2px;background:#e5e7eb;"></div>
<div style="position:absolute;left:449px;top:972px;width:1508px;height:2px;background:#e5e7eb;"></div>
<div style="position:absolute;left:449px;top:1030px;width:1508px;height:2px;background:#e5e7eb;"></div>
<div style="position:absolute;left:449px;top:1088px;width:1508px;height:2px;background:#e5e7eb;"></div>
<div style="position:absolute;left:447px;top:1111px;width:1632px;height:2px;background:#e5e7eb;"></div>
<div style="position:absolute;left:2056px;top:740px;width:16px;height:36px;background:#c1c1c1;border-radius:8px;"></div>
<span style='position:absolute;left:463.60px;top:753.83px;font:400 25px/1 "Liberation Sans", sans-serif;color:#6b6e76;letter-spacing:1.752px;white-space:nowrap;-webkit-text-stroke:0.6px #6b6e76;'>emp_no</span>
<svg style="left:575px;top:754px" width="27" height="23" viewBox="0 0 28 24"><use href="#sort"/></svg>
<span style='position:absolute;left:637.60px;top:753.83px;font:400 25px/1 "Liberation Sans", sans-serif;color:#6b6e76;letter-spacing:2.234px;white-space:nowrap;-webkit-text-stroke:0.6px #6b6e76;'>birth_date</span>
<svg style="left:780px;top:754px" width="27" height="23" viewBox="0 0 28 24"><use href="#sort"/></svg>
<span style='position:absolute;left:1009.40px;top:753.83px;font:400 25px/1 "Liberation Sans", sans-serif;color:#6b6e76;letter-spacing:1.977px;white-space:nowrap;-webkit-text-stroke:0.6px #6b6e76;'>first_name</span>
<svg style="left:1157px;top:754px" width="27" height="23" viewBox="0 0 28 24"><use href="#sort"/></svg>
<span style='position:absolute;left:1219.00px;top:753.83px;font:400 25px/1 "Liberation Sans", sans-serif;color:#6b6e76;letter-spacing:1.795px;white-space:nowrap;-webkit-text-stroke:0.6px #6b6e76;'>last_name</span>
<svg style="left:1361px;top:754px" width="27" height="23" viewBox="0 0 28 24"><use href="#sort"/></svg>
<span style='position:absolute;left:1438.20px;top:753.83px;font:400 25px/1 "Liberation Sans", sans-serif;color:#6b6e76;letter-spacing:2.016px;white-space:nowrap;-webkit-text-stroke:0.6px #6b6e76;'>gender</span>
<svg style="left:1539px;top:754px" width="27" height="23" viewBox="0 0 28 24"><use href="#sort"/></svg>
<span style='position:absolute;left:1601.20px;top:753.83px;font:400 25px/1 "Liberation Sans", sans-serif;color:#6b6e76;letter-spacing:1.769px;white-space:nowrap;-webkit-text-stroke:0.6px #6b6e76;'>hire_date</span>
<svg style="left:1732px;top:754px" width="27" height="23" viewBox="0 0 28 24"><use href="#sort"/></svg>
<div style="left:0;top:0;width:2096px;height:1111px;overflow:hidden;">
<span style='position:absolute;left:464.00px;top:814.02px;font:400 30px/1 "Liberation Mono", monospace;color:#111;letter-spacing:-1.180px;white-space:nowrap;-webkit-text-stroke:0.3px #111;'>10001</span>
<span style='position:absolute;left:637.00px;top:814.02px;font:400 30px/1 "Liberation Mono", monospace;color:#111;letter-spacing:-1.180px;white-space:nowrap;-webkit-text-stroke:0.3px #111;'>1953–09–02T00:00:00Z</span>
<span style='position:absolute;left:1009.00px;top:814.02px;font:400 30px/1 "Liberation Mono", monospace;color:#111;letter-spacing:-1.180px;white-space:nowrap;-webkit-text-stroke:0.3px #111;'>Georgi</span>
<span style='position:absolute;left:1219.80px;top:814.02px;font:400 30px/1 "Liberation Mono", monospace;color:#111;letter-spacing:-1.180px;white-space:nowrap;-webkit-text-stroke:0.3px #111;'>Facello</span>
<span style='position:absolute;left:1438.00px;top:814.02px;font:400 30px/1 "Liberation Mono", monospace;color:#111;letter-spacing:-1.180px;white-space:nowrap;-webkit-text-stroke:0.3px #111;'>M</span>
<span style='position:absolute;left:1601.50px;top:814.02px;font:400 30px/1 "Liberation Mono", monospace;color:#111;letter-spacing:-1.180px;white-space:nowrap;-webkit-text-stroke:0.3px #111;'>1986–06–26T00:00:00Z</span>
<span style='position:absolute;left:464.00px;top:872.02px;font:400 30px/1 "Liberation Mono", monospace;color:#111;letter-spacing:-1.180px;white-space:nowrap;-webkit-text-stroke:0.3px #111;'>10002</span>
<span style='position:absolute;left:637.00px;top:872.02px;font:400 30px/1 "Liberation Mono", monospace;color:#111;letter-spacing:-1.180px;white-space:nowrap;-webkit-text-stroke:0.3px #111;'>1964–06–02T00:00:00Z</span>
<span style='position:absolute;left:1008.00px;top:872.02px;font:400 30px/1 "Liberation Mono", monospace;color:#111;letter-spacing:-1.180px;white-space:nowrap;-webkit-text-stroke:0.3px #111;'>Bezalel</span>
<span style='position:absolute;left:1220.80px;top:872.02px;font:400 30px/1 "Liberation Mono", monospace;color:#111;letter-spacing:-1.180px;white-space:nowrap;-webkit-text-stroke:0.3px #111;'>Simmel</span>
<span style='position:absolute;left:1437.00px;top:872.02px;font:400 30px/1 "Liberation Mono", monospace;color:#111;letter-spacing:-1.180px;white-space:nowrap;-webkit-text-stroke:0.3px #111;'>F</span>
<span style='position:absolute;left:1601.50px;top:872.02px;font:400 30px/1 "Liberation Mono", monospace;color:#111;letter-spacing:-1.180px;white-space:nowrap;-webkit-text-stroke:0.3px #111;'>1985–11–21T00:00:00Z</span>
<span style='position:absolute;left:464.00px;top:930.02px;font:400 30px/1 "Liberation Mono", monospace;color:#111;letter-spacing:-1.180px;white-space:nowrap;-webkit-text-stroke:0.3px #111;'>10003</span>
<span style='position:absolute;left:637.00px;top:930.02px;font:400 30px/1 "Liberation Mono", monospace;color:#111;letter-spacing:-1.180px;white-space:nowrap;-webkit-text-stroke:0.3px #111;'>1959–12–03T00:00:00Z</span>
<span style='position:absolute;left:1008.00px;top:930.02px;font:400 30px/1 "Liberation Mono", monospace;color:#111;letter-spacing:-1.180px;white-space:nowrap;-webkit-text-stroke:0.3px #111;'>Parto</span>
<span style='position:absolute;left:1219.80px;top:930.02px;font:400 30px/1 "Liberation Mono", monospace;color:#111;letter-spacing:-1.180px;white-space:nowrap;-webkit-text-stroke:0.3px #111;'>Bamford</span>
<span style='position:absolute;left:1438.00px;top:930.02px;font:400 30px/1 "Liberation Mono", monospace;color:#111;letter-spacing:-1.180px;white-space:nowrap;-webkit-text-stroke:0.3px #111;'>M</span>
<span style='position:absolute;left:1601.50px;top:930.02px;font:400 30px/1 "Liberation Mono", monospace;color:#111;letter-spacing:-1.180px;white-space:nowrap;-webkit-text-stroke:0.3px #111;'>1986–08–28T00:00:00Z</span>
<span style='position:absolute;left:464.00px;top:988.02px;font:400 30px/1 "Liberation Mono", monospace;color:#111;letter-spacing:-1.180px;white-space:nowrap;-webkit-text-stroke:0.3px #111;'>10004</span>
<span style='position:absolute;left:637.00px;top:988.02px;font:400 30px/1 "Liberation Mono", monospace;color:#111;letter-spacing:-1.180px;white-space:nowrap;-webkit-text-stroke:0.3px #111;'>1954–05–01T00:00:00Z</span>
<span style='position:absolute;left:1009.00px;top:988.02px;font:400 30px/1 "Liberation Mono", monospace;color:#111;letter-spacing:-1.180px;white-space:nowrap;-webkit-text-stroke:0.3px #111;'>Chirstian</span>
<span style='position:absolute;left:1219.80px;top:988.02px;font:400 30px/1 "Liberation Mono", monospace;color:#111;letter-spacing:-1.180px;white-space:nowrap;-webkit-text-stroke:0.3px #111;'>Koblick</span>
<span style='position:absolute;left:1438.00px;top:988.02px;font:400 30px/1 "Liberation Mono", monospace;color:#111;letter-spacing:-1.180px;white-space:nowrap;-webkit-text-stroke:0.3px #111;'>M</span>
<span style='position:absolute;left:1601.50px;top:988.02px;font:400 30px/1 "Liberation Mono", monospace;color:#111;letter-spacing:-1.180px;white-space:nowrap;-webkit-text-stroke:0.3px #111;'>1986–12–01T00:00:00Z</span>
<span style='position:absolute;left:464.00px;top:1046.02px;font:400 30px/1 "Liberation Mono", monospace;color:#111;letter-spacing:-1.180px;white-space:nowrap;-webkit-text-stroke:0.3px #111;'>10005</span>
<span style='position:absolute;left:637.00px;top:1046.02px;font:400 30px/1 "Liberation Mono", monospace;color:#111;letter-spacing:-1.180px;white-space:nowrap;-webkit-text-stroke:0.3px #111;'>1955–01–21T00:00:00Z</span>
<span style='position:absolute;left:1008.00px;top:1046.02px;font:400 30px/1 "Liberation Mono", monospace;color:#111;letter-spacing:-1.180px;white-space:nowrap;-webkit-text-stroke:0.3px #111;'>Kyoichi</span>
<span style='position:absolute;left:1220.80px;top:1046.02px;font:400 30px/1 "Liberation Mono", monospace;color:#111;letter-spacing:-1.180px;white-space:nowrap;-webkit-text-stroke:0.3px #111;'>Maliniak</span>
<span style='position:absolute;left:1438.00px;top:1046.02px;font:400 30px/1 "Liberation Mono", monospace;color:#111;letter-spacing:-1.180px;white-space:nowrap;-webkit-text-stroke:0.3px #111;'>M</span>
<span style='position:absolute;left:1601.50px;top:1046.02px;font:400 30px/1 "Liberation Mono", monospace;color:#111;letter-spacing:-1.180px;white-space:nowrap;-webkit-text-stroke:0.3px #111;'>1989–09–12T00:00:00Z</span>
<span style='position:absolute;left:464.00px;top:1104.02px;font:400 30px/1 "Liberation Mono", monospace;color:#111;letter-spacing:-1.180px;white-space:nowrap;-webkit-text-stroke:0.3px #111;'>10006</span>
<span style='position:absolute;left:637.00px;top:1104.02px;font:400 30px/1 "Liberation Mono", monospace;color:#111;letter-spacing:-1.180px;white-space:nowrap;-webkit-text-stroke:0.3px #111;'>1953–04–20T00:00:00Z</span>
<span style='position:absolute;left:1010.00px;top:1104.02px;font:400 30px/1 "Liberation Mono", monospace;color:#111;letter-spacing:-1.180px;white-space:nowrap;-webkit-text-stroke:0.3px #111;'>Anneke</span>
<span style='position:absolute;left:1219.80px;top:1104.02px;font:400 30px/1 "Liberation Mono", monospace;color:#111;letter-spacing:-1.180px;white-space:nowrap;-webkit-text-stroke:0.3px #111;'>Preusig</span>
<span style='position:absolute;left:1437.00px;top:1104.02px;font:400 30px/1 "Liberation Mono", monospace;color:#111;letter-spacing:-1.180px;white-space:nowrap;-webkit-text-stroke:0.3px #111;'>F</span>
<span style='position:absolute;left:1601.50px;top:1104.02px;font:400 30px/1 "Liberation Mono", monospace;color:#111;letter-spacing:-1.180px;white-space:nowrap;-webkit-text-stroke:0.3px #111;'>1989–06–02T00:00:00Z</span>
</div>
<span style='position:absolute;left:446.30px;top:1127.18px;font:400 24px/1 "Liberation Sans", sans-serif;color:#737373;letter-spacing:0.459px;white-space:nowrap;'>SELECT * FROM "public"."employee" LIMIT 50</span>
<span style='position:absolute;left:1875.60px;top:1126.18px;font:400 24px/1 "Liberation Sans", sans-serif;color:#737373;letter-spacing:0.459px;white-space:nowrap;'>Query time: 19 ms</span>
<div style="left:0;top:1140px;width:22px;height:22px;background:radial-gradient(circle at 22px 0px, rgba(0,0,0,0) 21.5px, #c4c4c4 23px);"></div>
<div style="left:2074px;top:1140px;width:22px;height:22px;background:radial-gradient(circle at 0px 0px, rgba(0,0,0,0) 21.5px, #c4c4c4 23px);"></div>
</div></body></html>
